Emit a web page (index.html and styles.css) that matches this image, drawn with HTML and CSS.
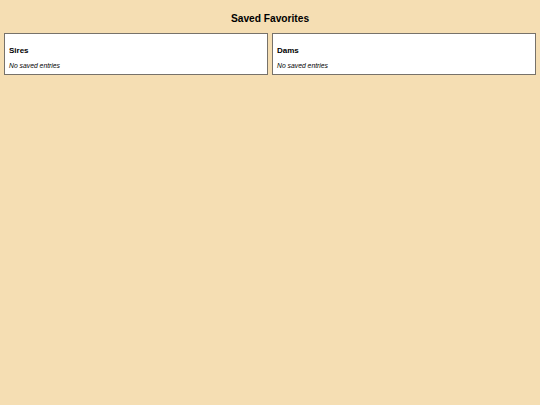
FILE: index.html
```html
<!DOCTYPE html>
<html lang="en">
<head>
    <meta charset="UTF-8">
    <title>Saved Favorites</title>
    <link rel="stylesheet" href="styles.css">
</head>
<body>
    <h1 class="page-title">Saved Favorites</h1>
    <div class="favorites">
        <div class="fav-box">
            <h2 class="fav-heading">Sires</h2>
            <p class="fav-empty">No saved entries</p>
        </div>
        <div class="fav-box">
            <h2 class="fav-heading">Dams</h2>
            <p class="fav-empty">No saved entries</p>
        </div>
    </div>
</body>
</html>
```

FILE: styles.css
```css
* {
    margin: 0;
    padding: 0;
    box-sizing: border-box;
}
body {
    font-family: 'Liberation Sans', Arial, sans-serif;
    background: #f5deb3;
    color: #000;
    padding: 0 4px;
}
.page-title {
    font-size: 10.2px;
    font-weight: bold;
    line-height: 12px;
    text-align: center;
    margin: 13px 0 8px;
}
.favorites {
    display: grid;
    grid-template-columns: 1fr 1fr;
    gap: 4px;
}
.fav-box {
    background: #fff;
    border: 1px solid #77726a;
    padding: 0 4px 4px;
}
.fav-heading {
    font-size: 8px;
    font-weight: bold;
    line-height: 9px;
    margin-top: 12px;
}
.fav-empty {
    font-size: 6.8px;
    font-style: italic;
    line-height: 8px;
    margin-top: 7px;
}
```
